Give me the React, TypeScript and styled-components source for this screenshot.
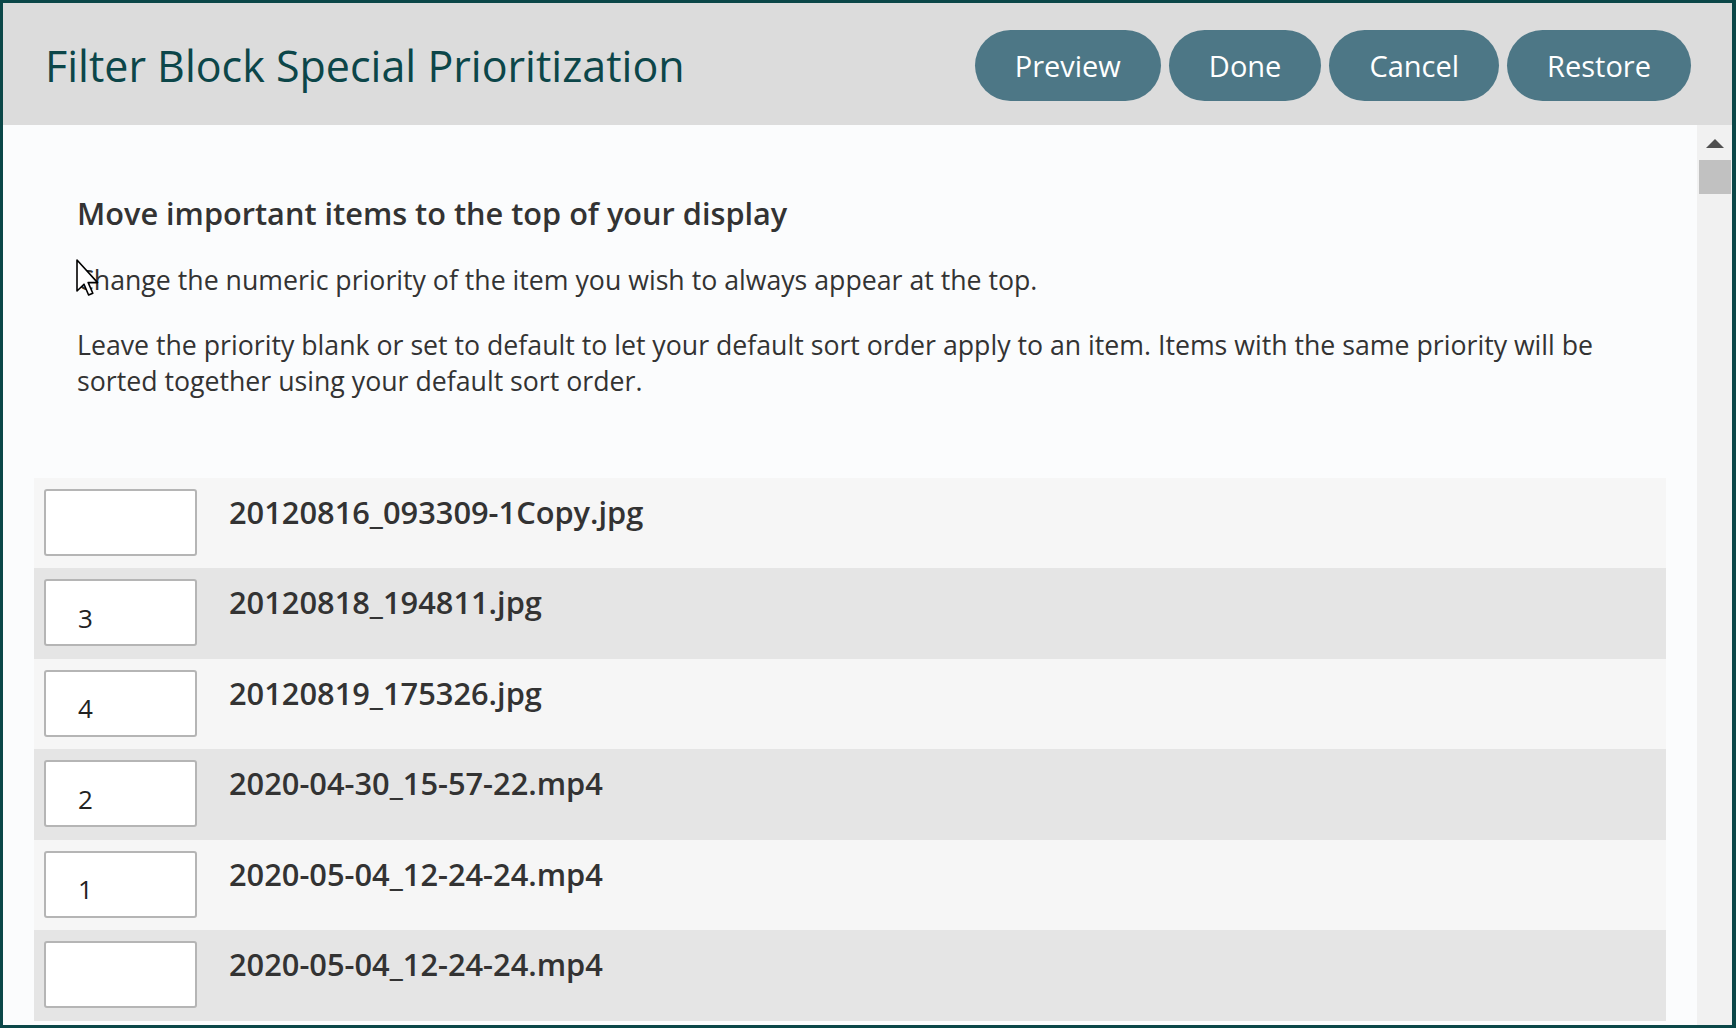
import * as React from "react";
import styled, { createGlobalStyle } from "styled-components";

const GlobalStyle = createGlobalStyle`
  html, body {
    margin: 0;
    padding: 0;
    overflow: hidden;
    background: #ffffff;
  }
  * {
    box-sizing: border-box;
  }
`;

const colour = {
  frame: "#0b4748",
  header: "#dcdcdc",
  title: "#0c4649",
  button: "#4d7786",
  content: "#fbfcfd",
  text: "#333333",
  rowLight: "#f6f6f6",
  rowDark: "#e5e5e5",
  inputBorder: "#b5b5b5",
  track: "#f1f1f1",
  thumb: "#c1c1c1",
  arrow: "#505050",
};

const Frame = styled.div`
  position: relative;
  width: 1736px;
  height: 1028px;
  border: 3px solid ${colour.frame};
  border-right-width: 4px;
  display: flex;
  flex-direction: column;
  font-family: "Open Sans", "Liberation Sans", sans-serif;
  color: ${colour.text};
`;

const Header = styled.header`
  flex: 0 0 122px;
  background: ${colour.header};
  display: flex;
  align-items: center;
  justify-content: space-between;
  padding: 3px 41px 0 42px;
`;

const Title = styled.h1`
  margin: 0;
  font-size: 43px;
  font-weight: 500;
  color: ${colour.title};
`;

const ButtonRow = styled.div`
  display: flex;
  gap: 8px;
`;

const PillButton = styled.button`
  height: 71px;
  padding: 0 40px;
  border: none;
  border-radius: 36px;
  background: ${colour.button};
  color: #ffffff;
  font-family: inherit;
  font-size: 29px;
  cursor: pointer;
`;

const Body = styled.div`
  flex: 1;
  display: flex;
  min-height: 0;
`;

const Content = styled.main`
  flex: 1;
  background: ${colour.content};
  overflow: hidden;
  padding-top: 68px;
`;

const Intro = styled.section`
  padding: 0 74px;
`;

const Heading = styled.h2`
  margin: 0 0 29px;
  font-size: 30.7px;
  line-height: 40px;
  font-weight: 600;
  color: ${colour.text};
`;

const Paragraph = styled.p`
  margin: 0 0 28px;
  font-size: 26.7px;
  line-height: 36.5px;
  color: ${colour.text};
`;

const List = styled.ul`
  list-style: none;
  margin: 78px 31px 0;
  padding: 0;
`;

const ItemRow = styled.li<{ $shade: "light" | "dark" }>`
  height: 90.6px;
  display: flex;
  align-items: flex-start;
  gap: 32px;
  padding: 11px 0 0 10px;
  background: ${(p) => (p.$shade === "light" ? colour.rowLight : colour.rowDark)};
`;

const PriorityInput = styled.input`
  width: 153px;
  height: 67px;
  border: 2px solid ${colour.inputBorder};
  border-radius: 3px;
  background: #ffffff;
  padding: 10px 0 0 32px;
  font-family: inherit;
  font-size: 26px;
  color: #222222;
  outline: none;
`;

const FileName = styled.span`
  padding-top: 3px;
  font-size: 30.8px;
  line-height: 40px;
  font-weight: 600;
  color: ${colour.text};
`;

const ScrollTrack = styled.div`
  flex: 0 0 35px;
  background: ${colour.track};
  display: flex;
  flex-direction: column;
  align-items: center;
  padding-top: 14px;
`;

const ScrollArrow = styled.div`
  width: 0;
  height: 0;
  border-left: 9px solid transparent;
  border-right: 9px solid transparent;
  border-bottom: 9px solid ${colour.arrow};
`;

const ScrollThumb = styled.div`
  margin-top: 12px;
  width: 32px;
  height: 34px;
  background: ${colour.thumb};
`;

const Pointer = styled.svg`
  position: absolute;
  left: 73px;
  top: 256px;
  width: 24px;
  height: 38px;
`;

const items = [
  { priority: "", name: "20120816_093309-1Copy.jpg" },
  { priority: "3", name: "20120818_194811.jpg" },
  { priority: "4", name: "20120819_175326.jpg" },
  { priority: "2", name: "2020-04-30_15-57-22.mp4" },
  { priority: "1", name: "2020-05-04_12-24-24.mp4" },
  { priority: "", name: "2020-05-04_12-24-24.mp4" },
];

export default function App() {
  return (
    <>
      <GlobalStyle />
      <Frame>
        <Header>
          <Title>Filter Block Special Prioritization</Title>
          <ButtonRow>
            <PillButton>Preview</PillButton>
            <PillButton>Done</PillButton>
            <PillButton>Cancel</PillButton>
            <PillButton>Restore</PillButton>
          </ButtonRow>
        </Header>

        <Body>
          <Content>
            <Intro>
              <Heading>Move important items to the top of your display</Heading>
              <Paragraph>
                Change the numeric priority of the item you wish to always appear at the top.
              </Paragraph>
              <Paragraph>
                Leave the priority blank or set to default to let your default sort order apply
                to an item. Items with the same priority will be sorted together using your
                default sort order.
              </Paragraph>
            </Intro>

            <List>
              {items.map((item, index) => (
                <ItemRow key={index} $shade={index % 2 === 0 ? "light" : "dark"}>
                  <PriorityInput defaultValue={item.priority} />
                  <FileName>{item.name}</FileName>
                </ItemRow>
              ))}
            </List>
          </Content>

          <ScrollTrack>
            <ScrollArrow />
            <ScrollThumb />
          </ScrollTrack>
        </Body>

        <Pointer viewBox="0 0 12 19">
          <path
            d="M0.5 0.5 L0.5 16 L4 12.6 L6.3 18 L8.4 17.1 L6.1 11.8 L10.8 11.8 Z"
            fill="#ffffff"
            stroke="#000000"
            strokeWidth="0.8"
            strokeLinejoin="round"
          />
        </Pointer>
      </Frame>
    </>
  );
}
